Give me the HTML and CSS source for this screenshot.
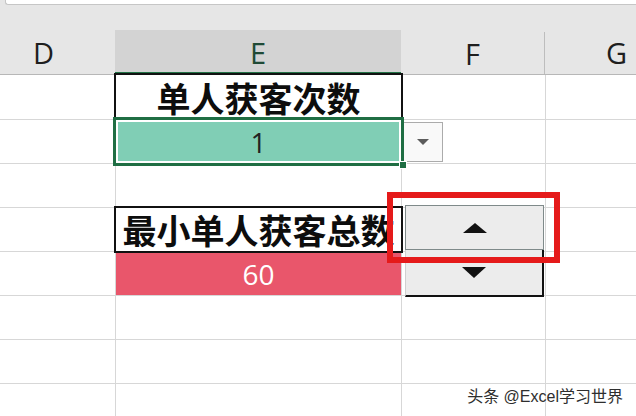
FILE: index.html
```html
<!DOCTYPE html>
<html lang="zh-CN">
<head>
  <meta charset="UTF-8" />
  <title>单人获客次数</title>
  <link rel="stylesheet" href="styles.css">
</head>
<body>
  <div class="top">
    <div class="formula-bar"></div>
    <div class="col-heads">
      <div class="ch ch-d">D</div>
      <div class="ch ch-e">E</div>
      <div class="ch ch-f">F</div>
      <div class="ch ch-g">G</div>
    </div>
  </div>

  <div class="sheet">
    <div class="grid">
      <!-- row 1 -->
      <div class="cell"></div>
      <div class="cell c-title">单人获客次数</div>
      <div class="cell"></div>
      <div class="cell"></div>
      <!-- row 2 -->
      <div class="cell"></div>
      <div class="cell c-active">1<span class="fill-handle"></span></div>
      <div class="cell c-drop"><div class="drop-btn"><span class="tri-down-sm"></span></div></div>
      <div class="cell"></div>
      <!-- row 3 -->
      <div class="cell"></div><div class="cell"></div><div class="cell"></div><div class="cell"></div>
      <!-- row 4 -->
      <div class="cell"></div>
      <div class="cell c-title">最小单人获客总数</div>
      <div class="cell"></div>
      <div class="cell"></div>
      <!-- row 5 -->
      <div class="cell"></div>
      <div class="cell c-red">60</div>
      <div class="cell"></div>
      <div class="cell"></div>
      <!-- rows 6-8 -->
      <div class="cell"></div><div class="cell"></div><div class="cell"></div><div class="cell"></div>
      <div class="cell"></div><div class="cell"></div><div class="cell"></div><div class="cell"></div>
      <div class="cell"></div><div class="cell"></div><div class="cell"></div><div class="cell"></div>
    </div>

    <div class="spinner">
      <div class="spin-up"><span class="tri-up"></span></div>
      <div class="spin-down"><span class="tri-down"></span></div>
    </div>
    <div class="mark"></div>
  </div>

  <div class="watermark">头条 @Excel学习世界</div>
</body>
</html>
```

FILE: styles.css
```css
body {
  margin: 0;
  width: 636px;
  height: 416px;
  overflow: hidden;
  position: relative;
  background: #fff;
  font-family: "Noto Sans CJK SC", "Noto Sans", sans-serif;
  color: #1c1c1c;
}
.top {
  background: #e6e6e6;
  height: 75px;
}
.formula-bar {
  height: 4px;
  margin-left: 5px;
  background: #fff;
  border-left: 1px solid #c6c6c6;
  border-bottom: 1px solid #c6c6c6;
  border-bottom-left-radius: 3px;
}
.col-heads {
  margin-top: 25px;
  display: grid;
  grid-template-columns: 115px 286px 144px 1fr;
  height: 44px;
  border-bottom: 1px solid #b7b7b7;
}
.ch {
  display: flex;
  align-items: center;
  justify-content: center;
  font-family: "Open Sans", "Liberation Sans", sans-serif;
  font-size: 29px;
  color: #1e1e1e;
}
.ch-d {
  justify-content: flex-start;
  padding-left: 33px;
}
.ch-e {
  background: #d3d3d3;
  color: #1f4a36;
  box-shadow: inset 0 -2px 0 #217346;
}
.ch-f {
  border-right: 1px solid #bdbdbd;
  margin-top: 2px;
}
.ch-g {
  justify-content: flex-start;
  padding-left: 61px;
}
.sheet {
  position: relative;
}
.grid {
  display: grid;
  grid-template-columns: 115px 285px 143px 1fr;
  grid-template-rows: 44px repeat(7, 43px);
  gap: 1px;
  background: #d7d7d7;
}
.cell {
  background: #fff;
  display: flex;
  align-items: center;
  justify-content: center;
  position: relative;
}
.c-title {
  outline: 2px solid #111;
  font-size: 34px;
  font-weight: 700;
  color: #0d0d0d;
  white-space: nowrap;
  z-index: 1;
}
.c-active {
  background: #80ceb5;
  box-shadow: inset 0 0 0 2px #fff;
  outline: 3px solid #1f6e43;
  z-index: 2;
  font-family: "Open Sans", "Liberation Sans", sans-serif;
  font-size: 28px;
  color: #222;
}
.fill-handle {
  position: absolute;
  right: -6px;
  bottom: -6px;
  width: 6px;
  height: 6px;
  background: #1f6e43;
  border: 1px solid #fff;
}
.c-drop {
  justify-content: flex-start;
}
.drop-btn {
  margin-left: 1px;
  width: 40px;
  height: 40px;
  box-sizing: border-box;
  border: 1px solid #ababab;
  background: #f9f9f9;
  display: flex;
  align-items: center;
  justify-content: center;
}
.tri-down-sm {
  width: 0;
  height: 0;
  border-left: 6px solid transparent;
  border-right: 6px solid transparent;
  border-top: 6px solid #5c5c5c;
}
.c-red {
  background: #e9566b;
  color: #fff;
  font-family: "Open Sans", "Liberation Sans", sans-serif;
  font-size: 28px;
}
.spinner {
  position: absolute;
  left: 405px;
  top: 130px;
  width: 139px;
  z-index: 3;
}
.spin-up {
  height: 45px;
  box-sizing: border-box;
  background: #ececec;
  border: 1px solid #7f8a8a;
  display: flex;
  align-items: center;
  justify-content: center;
}
.spin-down {
  height: 47px;
  box-sizing: border-box;
  background: #ececec;
  border-left: 1px solid #d0d0d0;
  border-right: 2px solid #111;
  border-bottom: 2px solid #111;
  display: flex;
  align-items: center;
  justify-content: center;
}
.tri-up {
  width: 0;
  height: 0;
  border-left: 12px solid transparent;
  border-right: 12px solid transparent;
  border-bottom: 10px solid #111;
}
.tri-down {
  width: 0;
  height: 0;
  border-left: 12px solid transparent;
  border-right: 12px solid transparent;
  border-top: 11px solid #111;
}
.mark {
  position: absolute;
  left: 387px;
  top: 117px;
  width: 173px;
  height: 71px;
  box-sizing: border-box;
  border: 6px solid #e51a1a;
  z-index: 4;
}
.watermark {
  position: absolute;
  right: 13px;
  top: 383px;
  font-family: "Liberation Sans", "Noto Sans CJK SC", sans-serif;
  font-size: 16px;
  color: #2e2e2e;
  text-shadow: 0 0 2px #fff;
}
```
